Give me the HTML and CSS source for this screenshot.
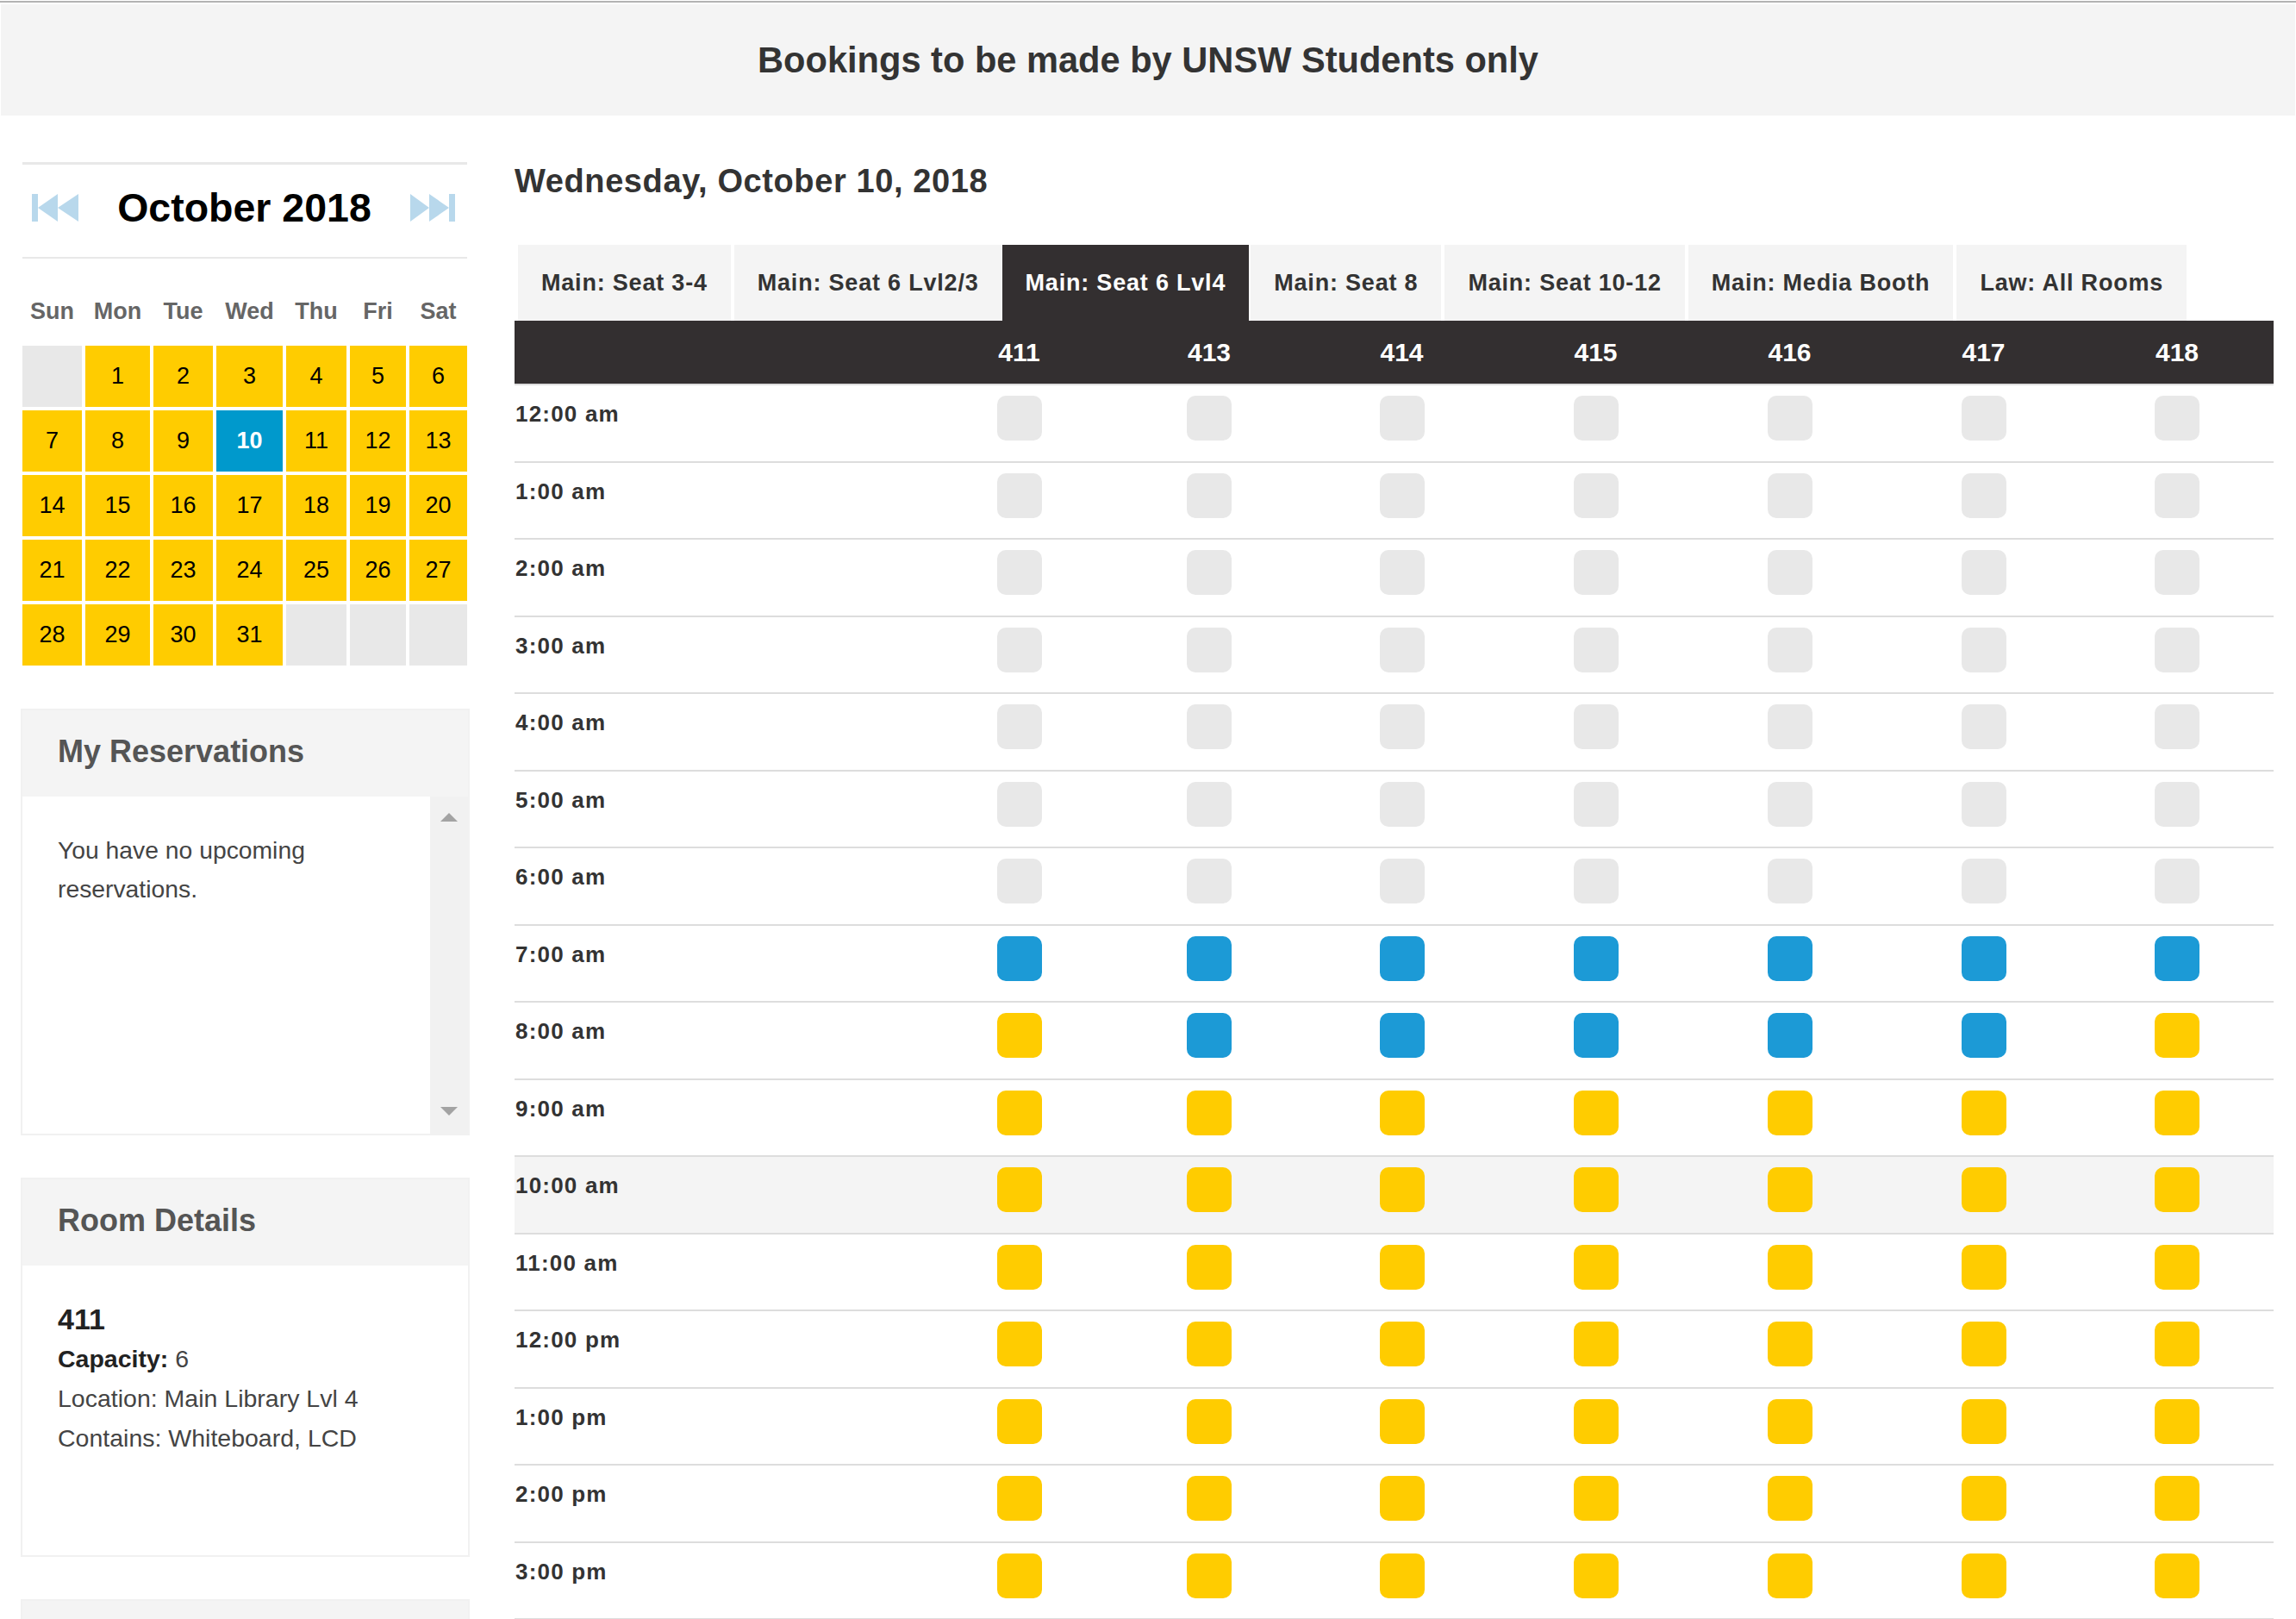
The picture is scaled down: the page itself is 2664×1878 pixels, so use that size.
FILE: index.html
```html
<!DOCTYPE html>
<html lang="en">
<head>
<meta charset="utf-8">
<title>Room Bookings</title>
<link rel="stylesheet" href="styles.css">
</head>
<body>
<div class="page">
  <div class="topline"></div>
  <header class="banner">Bookings to be made by UNSW Students only</header>
  <div class="layout">
    <aside class="sidebar">
      <section class="calendar">
        <div class="cal-nav">
          <svg class="nav-icon" width="54" height="32" viewBox="0 0 54 32"><rect x="0" y="0" width="7" height="32"/><polygon points="7,16 30,0 30,32"/><polygon points="30,16 54,0 54,32"/></svg>
          <span class="cal-title">October 2018</span>
          <svg class="nav-icon" width="52" height="32" viewBox="0 0 52 32"><polygon points="0,0 22,16 0,32"/><polygon points="22,0 45,16 22,32"/><rect x="45" y="0" width="7" height="32"/></svg>
        </div>
        <div class="cal-weekdays"><span>Sun</span><span>Mon</span><span>Tue</span><span>Wed</span><span>Thu</span><span>Fri</span><span>Sat</span></div>
        <div class="cal-grid">
          <span class="day empty"></span><span class="day">1</span><span class="day">2</span><span class="day">3</span><span class="day">4</span><span class="day">5</span><span class="day">6</span>
          <span class="day">7</span><span class="day">8</span><span class="day">9</span><span class="day today">10</span><span class="day">11</span><span class="day">12</span><span class="day">13</span>
          <span class="day">14</span><span class="day">15</span><span class="day">16</span><span class="day">17</span><span class="day">18</span><span class="day">19</span><span class="day">20</span>
          <span class="day">21</span><span class="day">22</span><span class="day">23</span><span class="day">24</span><span class="day">25</span><span class="day">26</span><span class="day">27</span>
          <span class="day">28</span><span class="day">29</span><span class="day">30</span><span class="day">31</span><span class="day empty"></span><span class="day empty"></span><span class="day empty"></span>
        </div>
      </section>
      <section class="panel panel-res">
        <h2 class="panel-head">My Reservations</h2>
        <div class="res-body">
          <p class="res-text">You have no upcoming reservations.</p>
          <div class="scrollbar"><span class="arrow up"></span><span class="arrow down"></span></div>
        </div>
      </section>
      <section class="panel panel-room">
        <h2 class="panel-head">Room Details</h2>
        <div class="room-body">
          <div class="room-num">411</div>
          <div><b class="strong">Capacity:</b> 6</div>
          <div>Location: Main Library Lvl 4</div>
          <div>Contains: Whiteboard, LCD</div>
        </div>
      </section>
      <section class="panel panel-more">
        <div class="panel-head"></div>
      </section>
    </aside>
    <main class="main">
      <h1 class="date">Wednesday, October 10, 2018</h1>
      <nav class="tabs">
        <span class="tab">Main: Seat 3-4</span>
        <span class="tab">Main: Seat 6 Lvl2/3</span>
        <span class="tab active">Main: Seat 6 Lvl4</span>
        <span class="tab">Main: Seat 8</span>
        <span class="tab">Main: Seat 10-12</span>
        <span class="tab">Main: Media Booth</span>
        <span class="tab">Law: All Rooms</span>
      </nav>
      <div class="sched">
        <div class="sched-head"><span></span><span>411</span><span>413</span><span>414</span><span>415</span><span>416</span><span>417</span><span>418</span></div>
        <div class="row"><span class="time">12:00 am</span><span class="slot"><i class="sq"></i></span><span class="slot"><i class="sq"></i></span><span class="slot"><i class="sq"></i></span><span class="slot"><i class="sq"></i></span><span class="slot"><i class="sq"></i></span><span class="slot"><i class="sq"></i></span><span class="slot"><i class="sq"></i></span></div>
        <div class="row"><span class="time">1:00 am</span><span class="slot"><i class="sq"></i></span><span class="slot"><i class="sq"></i></span><span class="slot"><i class="sq"></i></span><span class="slot"><i class="sq"></i></span><span class="slot"><i class="sq"></i></span><span class="slot"><i class="sq"></i></span><span class="slot"><i class="sq"></i></span></div>
        <div class="row"><span class="time">2:00 am</span><span class="slot"><i class="sq"></i></span><span class="slot"><i class="sq"></i></span><span class="slot"><i class="sq"></i></span><span class="slot"><i class="sq"></i></span><span class="slot"><i class="sq"></i></span><span class="slot"><i class="sq"></i></span><span class="slot"><i class="sq"></i></span></div>
        <div class="row"><span class="time">3:00 am</span><span class="slot"><i class="sq"></i></span><span class="slot"><i class="sq"></i></span><span class="slot"><i class="sq"></i></span><span class="slot"><i class="sq"></i></span><span class="slot"><i class="sq"></i></span><span class="slot"><i class="sq"></i></span><span class="slot"><i class="sq"></i></span></div>
        <div class="row"><span class="time">4:00 am</span><span class="slot"><i class="sq"></i></span><span class="slot"><i class="sq"></i></span><span class="slot"><i class="sq"></i></span><span class="slot"><i class="sq"></i></span><span class="slot"><i class="sq"></i></span><span class="slot"><i class="sq"></i></span><span class="slot"><i class="sq"></i></span></div>
        <div class="row"><span class="time">5:00 am</span><span class="slot"><i class="sq"></i></span><span class="slot"><i class="sq"></i></span><span class="slot"><i class="sq"></i></span><span class="slot"><i class="sq"></i></span><span class="slot"><i class="sq"></i></span><span class="slot"><i class="sq"></i></span><span class="slot"><i class="sq"></i></span></div>
        <div class="row"><span class="time">6:00 am</span><span class="slot"><i class="sq"></i></span><span class="slot"><i class="sq"></i></span><span class="slot"><i class="sq"></i></span><span class="slot"><i class="sq"></i></span><span class="slot"><i class="sq"></i></span><span class="slot"><i class="sq"></i></span><span class="slot"><i class="sq"></i></span></div>
        <div class="row"><span class="time">7:00 am</span><span class="slot"><i class="sq b"></i></span><span class="slot"><i class="sq b"></i></span><span class="slot"><i class="sq b"></i></span><span class="slot"><i class="sq b"></i></span><span class="slot"><i class="sq b"></i></span><span class="slot"><i class="sq b"></i></span><span class="slot"><i class="sq b"></i></span></div>
        <div class="row"><span class="time">8:00 am</span><span class="slot"><i class="sq y"></i></span><span class="slot"><i class="sq b"></i></span><span class="slot"><i class="sq b"></i></span><span class="slot"><i class="sq b"></i></span><span class="slot"><i class="sq b"></i></span><span class="slot"><i class="sq b"></i></span><span class="slot"><i class="sq y"></i></span></div>
        <div class="row"><span class="time">9:00 am</span><span class="slot"><i class="sq y"></i></span><span class="slot"><i class="sq y"></i></span><span class="slot"><i class="sq y"></i></span><span class="slot"><i class="sq y"></i></span><span class="slot"><i class="sq y"></i></span><span class="slot"><i class="sq y"></i></span><span class="slot"><i class="sq y"></i></span></div>
        <div class="row hl"><span class="time">10:00 am</span><span class="slot"><i class="sq y"></i></span><span class="slot"><i class="sq y"></i></span><span class="slot"><i class="sq y"></i></span><span class="slot"><i class="sq y"></i></span><span class="slot"><i class="sq y"></i></span><span class="slot"><i class="sq y"></i></span><span class="slot"><i class="sq y"></i></span></div>
        <div class="row"><span class="time">11:00 am</span><span class="slot"><i class="sq y"></i></span><span class="slot"><i class="sq y"></i></span><span class="slot"><i class="sq y"></i></span><span class="slot"><i class="sq y"></i></span><span class="slot"><i class="sq y"></i></span><span class="slot"><i class="sq y"></i></span><span class="slot"><i class="sq y"></i></span></div>
        <div class="row"><span class="time">12:00 pm</span><span class="slot"><i class="sq y"></i></span><span class="slot"><i class="sq y"></i></span><span class="slot"><i class="sq y"></i></span><span class="slot"><i class="sq y"></i></span><span class="slot"><i class="sq y"></i></span><span class="slot"><i class="sq y"></i></span><span class="slot"><i class="sq y"></i></span></div>
        <div class="row"><span class="time">1:00 pm</span><span class="slot"><i class="sq y"></i></span><span class="slot"><i class="sq y"></i></span><span class="slot"><i class="sq y"></i></span><span class="slot"><i class="sq y"></i></span><span class="slot"><i class="sq y"></i></span><span class="slot"><i class="sq y"></i></span><span class="slot"><i class="sq y"></i></span></div>
        <div class="row"><span class="time">2:00 pm</span><span class="slot"><i class="sq y"></i></span><span class="slot"><i class="sq y"></i></span><span class="slot"><i class="sq y"></i></span><span class="slot"><i class="sq y"></i></span><span class="slot"><i class="sq y"></i></span><span class="slot"><i class="sq y"></i></span><span class="slot"><i class="sq y"></i></span></div>
        <div class="row"><span class="time">3:00 pm</span><span class="slot"><i class="sq y"></i></span><span class="slot"><i class="sq y"></i></span><span class="slot"><i class="sq y"></i></span><span class="slot"><i class="sq y"></i></span><span class="slot"><i class="sq y"></i></span><span class="slot"><i class="sq y"></i></span><span class="slot"><i class="sq y"></i></span></div>
      </div>
    </main>
  </div>
</div>
</body>
</html>
```

FILE: styles.css
```css
* { box-sizing: border-box; }
html, body { margin: 0; padding: 0; overflow: hidden; background: #fff; }
body { font-family: "Liberation Sans", Arial, Helvetica, sans-serif; color: #333; }

.page { height: 1878px; overflow: hidden; }

.topline { height: 2px; margin-top: 1px; background: #b3b3b3; }
.banner {
  margin: 2px 1px 0;
  height: 129px;
  background: #f4f4f4;
  display: flex;
  align-items: center;
  justify-content: center;
  font-size: 41.6px;
  font-weight: bold;
  color: #333;
}

.layout {
  display: flex;
  align-items: flex-start;
  gap: 52px;
  padding: 54px 26px 0 24px;
}

/* ---------- sidebar ---------- */
.sidebar { width: 521px; flex: none; }

.calendar { margin: 0 3px 0 2px; }
.cal-nav {
  height: 112px;
  border-top: 3px solid #e8e8e8;
  border-bottom: 2px solid #e8e8e8;
  display: flex;
  align-items: center;
  justify-content: space-between;
  padding: 0 14px 7px 11px;
}
.nav-icon { fill: #b8d8ec; display: block; }
.cal-title { font-size: 46.5px; font-weight: bold; color: #000; line-height: 1; }

.cal-weekdays, .cal-grid {
  display: grid;
  grid-template-columns: 69px 75px 69px 77px 70px 65px 67px;
  column-gap: 4px;
}
.cal-weekdays {
  padding: 45px 0 24px;
  line-height: 32px;
  font-size: 27px;
  font-weight: bold;
  color: #666;
  text-align: center;
}
.cal-grid { grid-auto-rows: 71px; row-gap: 4px; }
.day {
  background: #ffcc00;
  display: flex;
  align-items: center;
  justify-content: center;
  font-size: 27px;
  color: #000;
}
.day.empty { background: #e8e8e8; }
.day.today { background: #0099cc; color: #fff; font-weight: bold; }

.panel { margin-top: 50px; border: 2px solid #f1f1f1; }
.panel-room, .panel-more { margin-top: 49px; }
.panel-head {
  margin: 0;
  height: 100px;
  background: #f4f4f4;
  display: flex;
  align-items: center;
  padding: 0 0 4px 41px;
  font-size: 36px;
  font-weight: bold;
  color: #555;
}

.res-body { height: 391px; display: flex; }
.res-text {
  flex: 1;
  margin: 0;
  padding: 40px 20px 0 41px;
  font-size: 28.3px;
  line-height: 45px;
  color: #444;
}
.scrollbar {
  width: 44px;
  flex: none;
  background: #f1f1f1;
  display: flex;
  flex-direction: column;
  justify-content: space-between;
  align-items: center;
  padding: 19px 0 21px;
}
.arrow { width: 0; height: 0; border-left: 10px solid transparent; border-right: 10px solid transparent; }
.arrow.up { border-bottom: 10px solid #a3a3a3; }
.arrow.down { border-top: 10px solid #a3a3a3; }

.room-body {
  height: 336px;
  padding: 39px 41px 0;
  font-size: 28.5px;
  line-height: 46px;
  color: #444;
}
.room-num { font-size: 34px; font-weight: bold; color: #222; }
.strong { color: #222; }

/* ---------- main ---------- */
.main { flex: 1; min-width: 0; }
.date {
  margin: 0 0 52px;
  font-size: 38px;
  line-height: 44px;
  font-weight: bold;
  color: #333;
  letter-spacing: 0.6px;
}

.tabs { display: flex; gap: 4px; margin-left: 4px; height: 88px; }
.tab {
  display: flex;
  align-items: center;
  padding: 0 27px;
  background: #f4f4f4;
  font-size: 27px;
  font-weight: bold;
  letter-spacing: 0.8px;
  color: #333;
  white-space: nowrap;
}
.tab.active { background: #332f30; color: #fff; margin: 0 -2px 0 -4px; }

.sched-head, .row {
  display: grid;
  grid-template-columns: 476px 219px 222px 225px 225px 225px 225px 224px;
}
.sched-head {
  height: 75px;
  background: #332f30;
  border-bottom: 2px solid #ddd;
  color: #fff;
  font-size: 30px;
  font-weight: bold;
  align-items: center;
  text-align: center;
}
.row { height: 89.5px; border-bottom: 2px solid #ddd; align-items: start; }
.row.hl { background: #f4f4f4; }
.time {
  padding: 18px 0 0 1px;
  font-size: 26px;
  line-height: 30px;
  font-weight: bold;
  letter-spacing: 1.2px;
  color: #333;
}
.slot { display: flex; justify-content: center; padding-top: 12px; }
.sq { display: block; width: 52px; height: 52px; border-radius: 10px; background: #e8e8e8; }
.sq.b { background: #1c9ad6; }
.sq.y { background: #ffcc00; }
```
